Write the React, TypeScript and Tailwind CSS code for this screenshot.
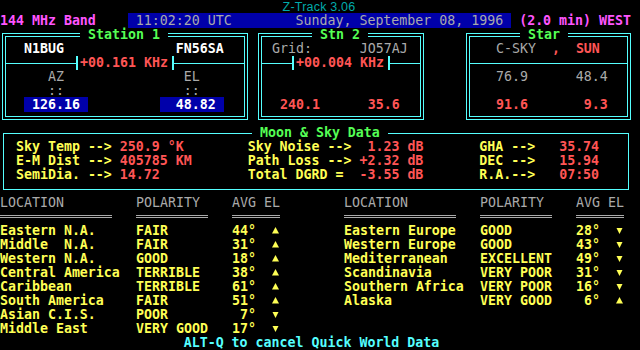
import type { ReactNode } from 'react';

type Item = [number, string, string];

const YEL = 'font-bold text-[#ffff55]';
const RED = 'font-bold text-[#ff5555]';
const GRAY = 'text-[#aaaaaa]';
const WHITE = 'font-bold text-white';
const MAG = 'font-bold text-[#ff55ff]';
const BLUEBOX = 'bg-[#0000aa] font-bold text-white';

// one text-mode row; items are placed at absolute character columns
function Line({ origin, items = [] }: { origin: number; items?: Item[] }) {
  let cursor = origin;
  const parts: ReactNode[] = [];
  items.forEach(([col, text, cls], i) => {
    if (col > cursor) parts.push(' '.repeat(col - cursor));
    parts.push(
      <span key={i} className={cls}>
        {text}
      </span>
    );
    cursor = col + text.length;
  });
  return <div className="h-[14px] whitespace-pre">{parts}</div>;
}

function Tuning({ text }: { text: string }) {
  return (
    <div className="flex h-[14px] items-center">
      <div className="h-px flex-1 bg-[#55ffff]" />
      <div className="h-[14px] w-[2px] bg-[#55ffff]" />
      <span className="whitespace-pre pl-[2px] pr-[4px] font-bold text-[#ff5555]">{text}</span>
      <div className="h-[14px] w-[2px] bg-[#55ffff]" />
      <div className="h-px flex-1 bg-[#55ffff]" />
    </div>
  );
}

function Arrow({ up }: { up: boolean }) {
  return (
    <svg width="8" height="14" viewBox="0 0 8 14" className="block">
      {up ? (
        <polygon points="0,9.5 3.5,3 7,9.5" fill="#ffff55" />
      ) : (
        <polygon points="0.5,4 6.5,4 3.5,10" fill="#ffff55" />
      )}
    </svg>
  );
}

type Loc = { name: string; pol: string; el: string; up: boolean };

const leftRows: Loc[] = [
  { name: 'Eastern N.A.', pol: 'FAIR', el: '44°', up: true },
  { name: 'Middle  N.A.', pol: 'FAIR', el: '31°', up: true },
  { name: 'Western N.A.', pol: 'GOOD', el: '18°', up: true },
  { name: 'Central America', pol: 'TERRIBLE', el: '38°', up: true },
  { name: 'Caribbean', pol: 'TERRIBLE', el: '61°', up: true },
  { name: 'South America', pol: 'FAIR', el: '51°', up: true },
  { name: 'Asian C.I.S.', pol: 'POOR', el: '7°', up: false },
  { name: 'Middle East', pol: 'VERY GOOD', el: '17°', up: false },
];

const rightRows: Loc[] = [
  { name: 'Eastern Europe', pol: 'GOOD', el: '28°', up: false },
  { name: 'Western Europe', pol: 'GOOD', el: '43°', up: false },
  { name: 'Mediterranean', pol: 'EXCELLENT', el: '49°', up: false },
  { name: 'Scandinavia', pol: 'VERY POOR', el: '31°', up: false },
  { name: 'Southern Africa', pol: 'VERY POOR', el: '16°', up: false },
  { name: 'Alaska', pol: 'VERY GOOD', el: '6°', up: true },
];

function Table({ rows }: { rows: Loc[] }) {
  return (
    <div>
      <div className="flex h-[14px] text-[#aaaaaa]">
        <span className="w-[136px]">LOCATION</span>
        <span className="w-[96px]">POLARITY</span>
        <span>AVG EL</span>
      </div>
      <div className="flex h-[14px] items-start">
        <div className="mt-[5px] mr-[24px] h-[3px] w-[112px] border-y border-[#aaaaaa]" />
        <div className="mt-[5px] mr-[24px] h-[3px] w-[72px] border-y border-[#aaaaaa]" />
        <div className="mt-[5px] h-[3px] w-[48px] border-y border-[#aaaaaa]" />
      </div>
      {rows.map((r) => (
        <div key={r.name} className="flex h-[14px] font-bold text-[#ffff55] whitespace-pre">
          <span className="w-[136px]">{r.name}</span>
          <span className="w-[96px]">{r.pol}</span>
          <span className="w-[24px] text-right">{r.el}</span>
          <span className="ml-[16px]">
            <Arrow up={r.up} />
          </span>
        </div>
      ))}
    </div>
  );
}

const boxCls = 'border-4 border-double border-[#55ffff] pb-[4px] min-w-0';
const legendCls = 'h-[14px] px-[8px] font-bold text-[#55ff55]';

export default function App() {
  return (
    <div className="h-[350px] w-[640px] overflow-hidden bg-black font-['DejaVu_Sans_Mono',monospace] text-[13.288px] leading-[14px]">
      <div className="h-[14px] pr-[2px] text-center font-['Liberation_Sans',sans-serif] text-[12.5px] leading-[15px] tracking-[0.2px] text-[#00aaaa]">
        Z-Track 3.06
      </div>

      <Line
        origin={0}
        items={[
          [0, '144 MHz Band', MAG],
          [16, ' 11:02:20 UTC        Sunday, September 08, 1996 ', 'bg-[#0000aa] text-[#aaaaaa]'],
          [65, '(2.0 min) WEST', MAG],
        ]}
      />

      <div className="flex h-[98px] items-start">
        <fieldset className={`ml-[2px] w-[246px] ${boxCls}`}>
          <legend className={`ml-[74px] ${legendCls}`}>Station 1</legend>
          <div className="pl-[2px]">
            <Line origin={1} items={[[3, 'N1BUG', WHITE], [22, 'FN56SA', WHITE]]} />
          </div>
          <Tuning text="+00.161 KHz" />
          <div className="pl-[2px]">
            <Line origin={1} items={[[6, 'AZ', GRAY], [23, 'EL', GRAY]]} />
            <Line origin={1} items={[[6, '::', GRAY], [23, '::', GRAY]]} />
            <Line origin={1} items={[[3, ' 126.16 ', BLUEBOX], [20, '  48.82 ', BLUEBOX]]} />
          </div>
        </fieldset>

        <fieldset className={`ml-[10px] w-[166px] ${boxCls}`}>
          <legend className={`ml-[50px] ${legendCls}`}>Stn 2</legend>
          <div className="pl-[2px]">
            <Line origin={33} items={[[34, 'Grid:', GRAY], [45, 'JO57AJ', GRAY]]} />
          </div>
          <Tuning text="+00.004 KHz" />
          <div className="pl-[2px]">
            <Line origin={33} />
            <Line origin={33} />
            <Line origin={33} items={[[35, '240.1', RED], [46, '35.6', RED]]} />
          </div>
        </fieldset>

        <fieldset className={`ml-[42px] w-[165px] ${boxCls}`}>
          <legend className={`ml-[50px] ${legendCls}`}>Star</legend>
          <div className="pl-[2px]">
            <Line origin={59} items={[[62, 'C-SKY', GRAY], [69, ',', RED], [72, 'SUN', RED]]} />
          </div>
          <div className="flex h-[14px] items-center">
            <div className="h-px w-full bg-[#55ffff]" />
          </div>
          <div className="pl-[2px]">
            <Line origin={59} items={[[62, '76.9', GRAY], [72, '48.4', GRAY]]} />
            <Line origin={59} />
            <Line origin={59} items={[[62, '91.6', RED], [73, '9.3', RED]]} />
          </div>
        </fieldset>
      </div>

      <div className="h-[70px]">
        <fieldset className="ml-[3px] w-[626px] min-w-0 border border-[#55ffff] pb-[7px] pl-[4px]">
          <legend className="ml-[244px] h-[14px] px-[8px] font-bold text-[#55ff55]">Moon &amp; Sky Data</legend>
          <Line
            origin={1}
            items={[
              [2, 'Sky Temp -->', YEL],
              [15, '250.9 °K', RED],
              [31, 'Sky Noise -->', YEL],
              [46, '1.23 dB', RED],
              [60, 'GHA -->', YEL],
              [70, '35.74', RED],
            ]}
          />
          <Line
            origin={1}
            items={[
              [2, 'E-M Dist -->', YEL],
              [15, '405785 KM', RED],
              [31, 'Path Loss -->', YEL],
              [45, '+2.32 dB', RED],
              [60, 'DEC -->', YEL],
              [70, '15.94', RED],
            ]}
          />
          <Line
            origin={1}
            items={[
              [2, 'SemiDia. -->', YEL],
              [15, '14.72', RED],
              [31, 'Total DGRD =', YEL],
              [45, '-3.55 dB', RED],
              [60, 'R.A.-->', YEL],
              [70, '07:50', RED],
            ]}
          />
        </fieldset>
      </div>

      <div className="grid h-[140px] grid-cols-[280px_280px] gap-x-[64px]">
        <Table rows={leftRows} />
        <Table rows={rightRows} />
      </div>

      <Line origin={0} items={[[23, 'ALT-Q to cancel Quick World Data', 'font-bold text-[#55ffff]']]} />
    </div>
  );
}
